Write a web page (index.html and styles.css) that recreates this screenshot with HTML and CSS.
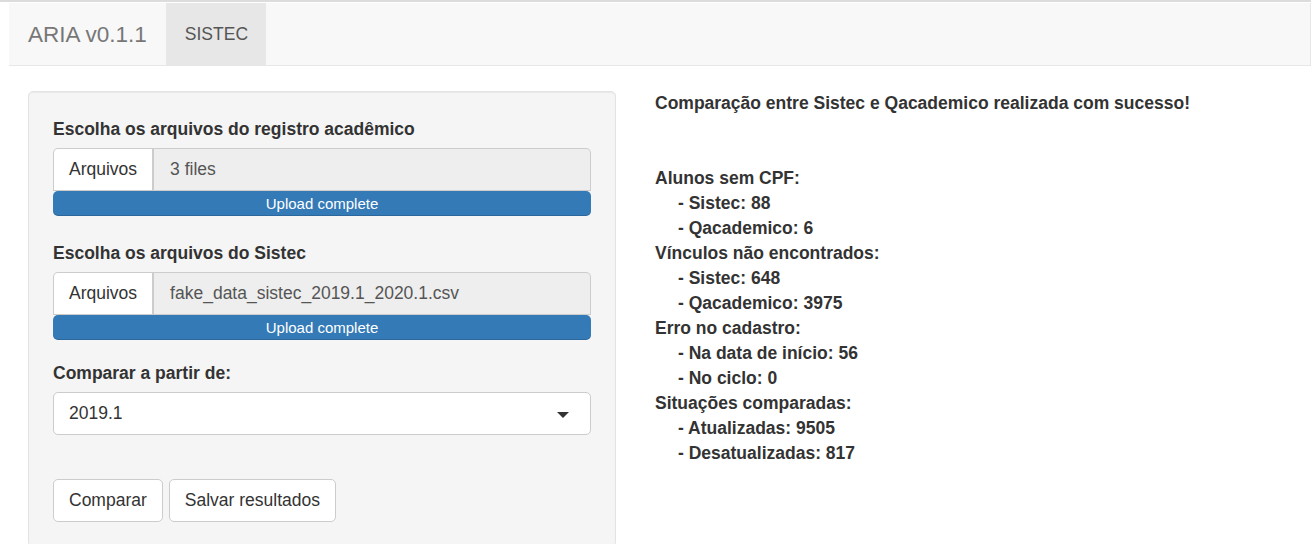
FILE: index.html
```html
<!DOCTYPE html>
<html lang="pt">
<head>
<meta charset="utf-8">
<title>ARIA v0.1.1</title>
<link rel="stylesheet" href="styles.css">
</head>
<body>
<div class="topline"></div>
<div class="page">
  <nav class="navbar">
    <span class="brand">ARIA v0.1.1</span>
    <span class="tab active">SISTEC</span>
  </nav>
  <main class="content">
    <aside class="well">
      <div class="form-group file-group first">
        <label class="label">Escolha os arquivos do registro acadêmico</label>
        <div class="input-group">
          <span class="btn-file">Arquivos</span>
          <span class="file-name">3 files</span>
        </div>
        <div class="progress">Upload complete</div>
      </div>
      <div class="form-group file-group second">
        <label class="label">Escolha os arquivos do Sistec</label>
        <div class="input-group">
          <span class="btn-file">Arquivos</span>
          <span class="file-name">fake_data_sistec_2019.1_2020.1.csv</span>
        </div>
        <div class="progress">Upload complete</div>
      </div>
      <div class="form-group select-group">
        <label class="label">Comparar a partir de:</label>
        <div class="select">
          <span>2019.1</span>
          <span class="caret"></span>
        </div>
      </div>
      <div class="actions">
        <button class="btn">Comparar</button>
        <button class="btn">Salvar resultados</button>
      </div>
    </aside>
    <section class="results">
      <div class="line">Comparação entre Sistec e Qacademico realizada com sucesso!</div>
      <div class="spacer"></div>
      <div class="line">Alunos sem CPF:</div>
      <div class="line sub">- Sistec: 88</div>
      <div class="line sub">- Qacademico: 6</div>
      <div class="line">Vínculos não encontrados:</div>
      <div class="line sub">- Sistec: 648</div>
      <div class="line sub">- Qacademico: 3975</div>
      <div class="line">Erro no cadastro:</div>
      <div class="line sub">- Na data de início: 56</div>
      <div class="line sub">- No ciclo: 0</div>
      <div class="line">Situações comparadas:</div>
      <div class="line sub">- Atualizadas: 9505</div>
      <div class="line sub">- Desatualizadas: 817</div>
    </section>
  </main>
</div>
</body>
</html>
```

FILE: styles.css
```css
html, body {
  margin: 0;
  padding: 0;
  overflow: hidden;
  background: #fff;
}
body {
  font-family: "Liberation Sans", Arial, Helvetica, sans-serif;
  font-size: 17.5px;
  line-height: 25px;
  color: #333;
}
.topline {
  height: 2px;
  background: #dcdcdc;
}
.page {
  margin-left: 9px;
}
.navbar {
  margin-top: 1px;
  height: 62px;
  background: #f8f8f8;
  border-bottom: 1px solid #e7e7e7;
  border-right: 1px solid #e7e7e7;
  display: flex;
  align-items: stretch;
}
.brand {
  display: flex;
  align-items: center;
  padding: 0 19px;
  font-size: 22.5px;
  color: #777;
}
.tab {
  display: flex;
  align-items: center;
  padding: 0 18px 0 19px;
  color: #777;
  font-size: 17.5px;
}
.tab.active {
  background: #e7e7e7;
  color: #555;
}
.content {
  display: flex;
  align-items: flex-start;
  padding: 25px 19px 0;
  gap: 39px;
}
.well {
  width: 538px;
  flex: none;
  background: #f5f5f5;
  border: 1px solid #e3e3e3;
  border-radius: 5px;
  box-shadow: inset 0 1px 1px rgba(0,0,0,0.05);
  padding: 25px 24px 24px;
}
.label {
  display: block;
  font-weight: bold;
  margin-bottom: 6px;
}
.first {
  margin-bottom: 25px;
}
.second {
  margin-bottom: 21px;
}
.input-group {
  display: flex;
  height: 43px;
}
.btn-file {
  display: flex;
  align-items: center;
  padding: 0 15px;
  background: #fff;
  border: 1px solid #ccc;
  border-right-width: 2px;
  border-radius: 5px 0 0 0;
  color: #333;
}
.file-name {
  flex: 1;
  display: flex;
  align-items: center;
  padding: 0 16px;
  background: #eee;
  border: 1px solid #ccc;
  border-left: none;
  border-radius: 0 5px 0 0;
  color: #555;
}
.progress {
  height: 25px;
  line-height: 25px;
  background: #337ab7;
  border-radius: 5px;
  color: #fff;
  font-size: 15px;
  text-align: center;
  box-shadow: inset 0 -1px 0 rgba(0,0,0,0.15);
}
.select {
  height: 41px;
  display: flex;
  align-items: center;
  justify-content: space-between;
  padding: 0 21px 0 15px;
  background: #fff;
  border: 1px solid #ccc;
  border-radius: 5px;
  color: #333;
}
.caret {
  width: 0;
  height: 0;
  border-left: 6px solid transparent;
  border-right: 6px solid transparent;
  border-top: 6px solid #333;
  margin-top: 2px;
}
.actions {
  display: flex;
  gap: 6px;
  margin-top: 44px;
}
.btn {
  font-family: inherit;
  font-size: 17.5px;
  line-height: 25px;
  color: #333;
  background: #fff;
  border: 1px solid #ccc;
  border-radius: 5px;
  padding: 8px 15px 8px;
  margin: 0;
}
.results {
  flex: 1;
  font-weight: bold;
}
.spacer {
  height: 50px;
}
.sub {
  padding-left: 23px;
}
```
